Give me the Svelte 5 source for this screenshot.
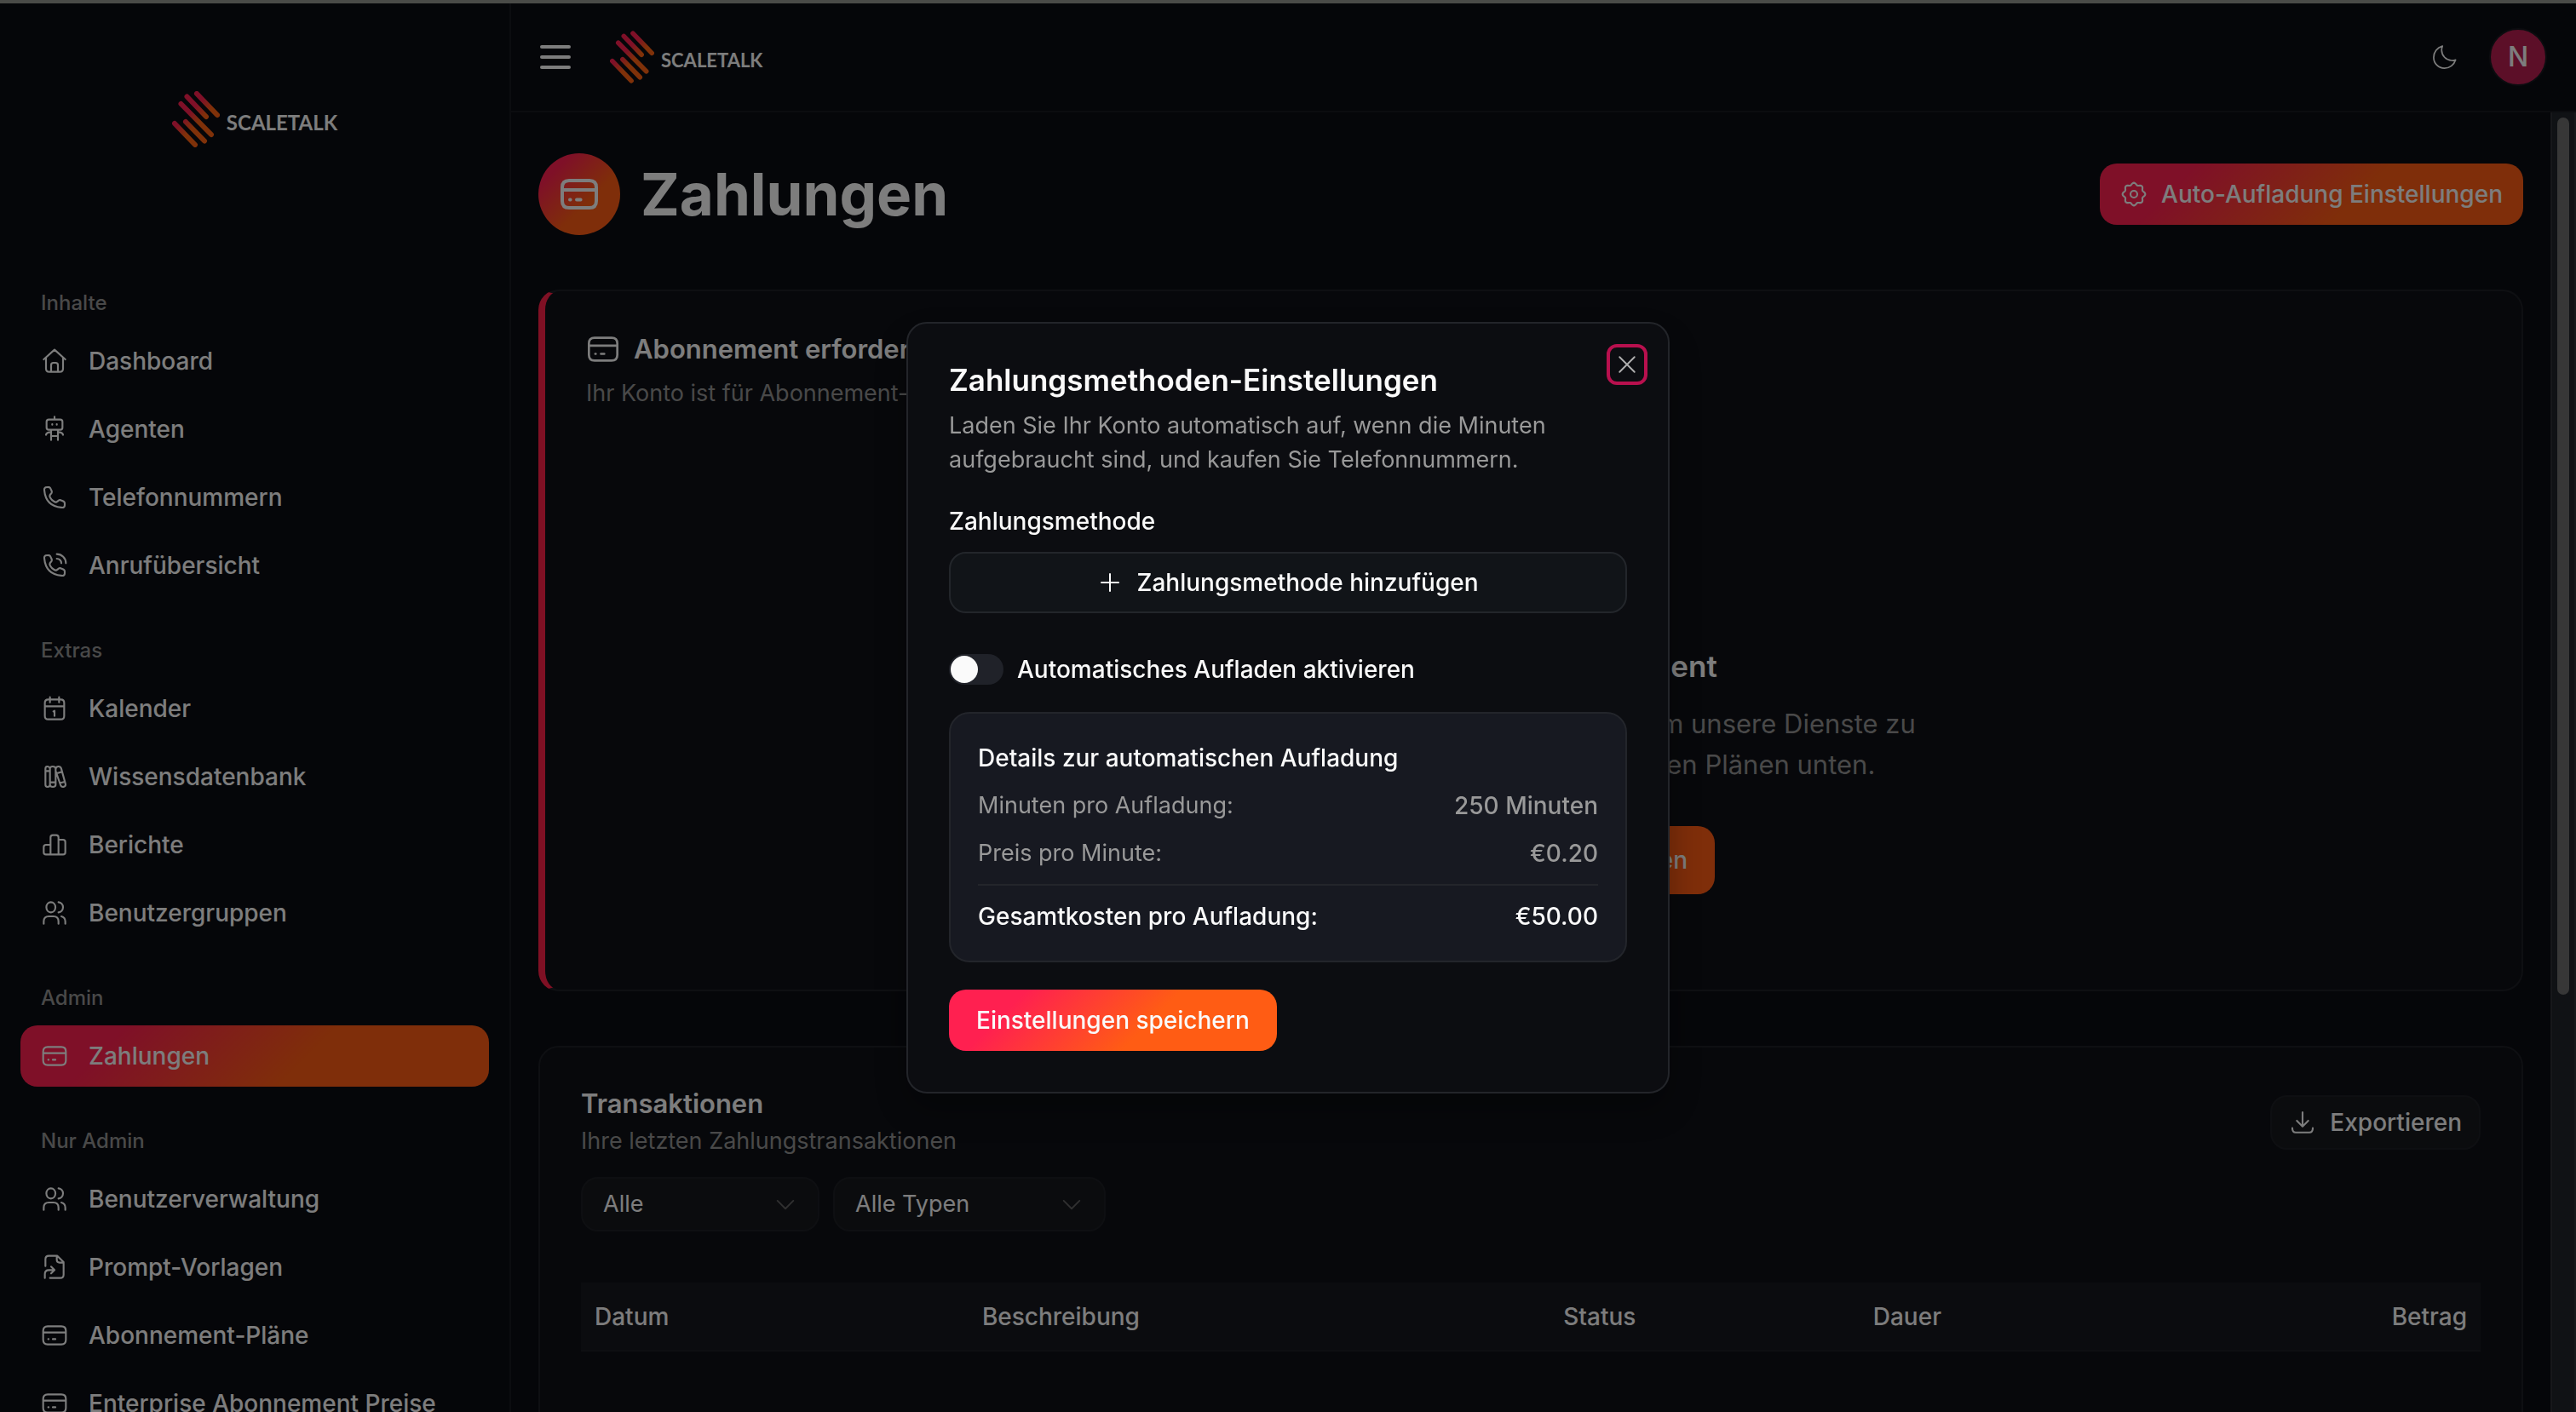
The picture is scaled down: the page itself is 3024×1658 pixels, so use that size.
<script>
	// scalloped outline of the settings wheel
	function gear(cx, cy, lobes) {
		let d = '';
		for (let i = 0; i < 96; i++) {
			const a = (i / 96) * Math.PI * 2;
			const r = 9.1 + 0.9 * Math.cos(lobes * a);
			d += `${i ? 'L' : 'M'}${(cx + r * Math.sin(a)).toFixed(2)} ${(cy - r * Math.cos(a)).toFixed(2)}`;
		}
		return d + 'Z';
	}

	const handset = 'M9.16 5.71L8.76 4.81C8.49 4.21 8.36 3.92 8.16 3.69C7.92 3.41 7.6 3.2 7.24 3.09C6.95 3 6.62 3 5.98 3C5.03 3 4.55 3 4.16 3.18C3.69 3.4 3.26 3.86 3.09 4.35C2.95 4.76 2.99 5.19 3.07 6.04C3.95 15.09 8.91 20.05 17.96 20.93C18.81 21.01 19.24 21.05 19.65 20.91C20.14 20.74 20.6 20.31 20.82 19.84C21 19.45 21 18.97 21 18.02C21 17.38 21 17.05 20.91 16.76C20.8 16.4 20.59 16.08 20.31 15.84C20.08 15.64 19.79 15.51 19.19 15.24L18.29 14.84C17.65 14.56 17.33 14.41 17 14.38C16.69 14.35 16.37 14.4 16.08 14.51C15.78 14.63 15.51 14.85 14.97 15.3C14.43 15.75 14.16 15.97 13.83 16.09C13.54 16.2 13.16 16.24 12.85 16.2C12.51 16.14 12.24 16 11.71 15.72C10.07 14.84 9.16 13.93 8.28 12.29C8 11.76 7.86 11.49 7.81 11.15C7.76 10.84 7.8 10.46 7.91 10.17C8.03 9.84 8.25 9.57 8.7 9.03C9.15 8.49 9.37 8.22 9.49 7.92C9.6 7.63 9.65 7.31 9.62 7C9.59 6.67 9.44 6.35 9.16 5.71Z';

	const icons = {
		home: 'M2.5 10.5L12 2l9.5 8.5M4.5 9v9.5c0 2 1 3 3 3h9c2 0 3-1 3-3V9M9 21.5v-6c0-1.4.6-2 2-2h2c1.4 0 2 .6 2 2v6',
		robot: 'M12 1v2.5M7 3.5h10c1.3 0 2 .7 2 2v5c0 1.3-.7 2-2 2H7c-1.3 0-2-.7-2-2v-5c0-1.3.7-2 2-2ZM10 7.5v.6M14 7.5v.6M9 12.5v9M15 12.5v9M9 18h6M4.5 17c.3-1.600 2-2.5 4.5-2.5M19.5 17c-.3-1.600-2-2.5-4.5-2.5',
		phone: handset,
		calls: handset + 'M14 2c4.4 0 8 3.6 8 8M14 6c2.2 0 4 1.8 4 4',
		calendar: 'M6.5 4h11c2 0 3 1 3 3v11.5c0 2-1 3-3 3h-11c-2 0-3-1-3-3V7c0-2 1-3 3-3ZM8 2v4.5M16 2v4.5M3.5 10h17M11 14.5l1-.5v4.5',
		books: 'M4 5c0-1.3.5-2 1.5-2S8 3.7 8 5v14c0 1.3-1 2-2.2 2S4 20.3 4 19ZM8 5c0-1.3.8-2 2.3-2S13 3.7 13 5v14c0 1.3-1 2-2.5 2S8 20.3 8 19M4 7h4M8 17h5M13 5.5c0-1.5.8-2.3 2.2-2.5 1.3-.1 2.3.5 2.7 1.8l3.7 13.4c.4 1.4-.2 2.4-1.6 2.7-1.4.3-2.3-.3-2.7-1.6L13 7M14 9l4.5-1.2M17 17.5l4-1',
		chart: 'M8.5 20.5v-8.5H4.5c-1.4 0-2 .6-2 2v4.5c0 1.4.6 2 2 2h15c1.4 0 2-.6 2-2V9.5c0-1.4-.6-2-2-2h-4M8.5 12V5.5c0-1.4.6-2 2-2h3c1.4 0 2 .6 2 2v15',
		users: 'M8.8 2.5c2.3 0 4 2 4 4.5s-1.7 4.5-4 4.5-4-2-4-4.5 1.7-4.5 4-4.5ZM15.5 2.5c2.2.2 4 2.1 4 4.5s-1.8 4.3-4 4.5M2.5 21.5v-2c0-2.8 1.7-4.5 4.5-4.5h4c2.8 0 4.5 1.7 4.5 4.5v2M18 15c2.3.6 3.5 2.3 3.5 4.5v2',
		card: 'M6 4h12c2.7 0 4 1.3 4 4v8c0 2.7-1.3 4-4 4H6c-2.7 0-4-1.3-4-4V8c0-2.7 1.3-4 4-4ZM2 9.5h20M6.5 15.3h.3M10.5 15.3h2.3',
		file: 'M4 11V5c0-2 1-3 3-3h7.5l5.5 5.5v11c0 2-1 3-3 3H8M14 2v3.5c0 1.7.8 2.5 2.5 2.5H20M3.5 21.5V18c0-2.3 1.2-3.5 3.5-3.5h5M9 11.5l3 3-3 3',
		gear: gear(12, 12, 8) + 'M12 9c1.7 0 3 1.3 3 3s-1.3 3-3 3-3-1.3-3-3 1.3-3 3-3Z',
		moon: 'M21.5 14.5c-1 .4-2.3.6-3.5.5C13 14.7 9.3 10.8 9.2 6c0-1.3.2-2.5.7-3.7C5.3 3.6 2.2 7.5 2.2 12.3c0 5.3 4.2 9.5 9.5 9.5 4.5 0 8.5-3 9.8-7.3Z',
		download: 'M12 3v12M7 10.5l5 5 5-5M3 17c0 2.5.8 3.8 3 3.8h12c2.2 0 3-1.3 3-3.8',
		plus: 'M12 4v16M4 12h16',
		close: 'M4.5 4.5l15 15M19.5 4.5l-15 15',
		chevron: 'M4 8.5l8 8 8-8'
	};

	const groups = [
		{
			title: 'Inhalte',
			items: [
				['home', 'Dashboard'],
				['robot', 'Agenten'],
				['phone', 'Telefonnummern'],
				['calls', 'Anrufübersicht']
			]
		},
		{
			title: 'Extras',
			items: [
				['calendar', 'Kalender'],
				['books', 'Wissensdatenbank'],
				['chart', 'Berichte'],
				['users', 'Benutzergruppen']
			]
		},
		{
			title: 'Admin',
			items: [['card', 'Zahlungen']]
		},
		{
			title: 'Nur Admin',
			items: [
				['users', 'Benutzerverwaltung'],
				['file', 'Prompt-Vorlagen'],
				['card', 'Abonnement-Pläne'],
				['card', 'Enterprise Abonnement Preise']
			]
		}
	];

	let active = $state('Zahlungen');
	let open = $state(true);
	let autoRecharge = $state(false);
	let minutes = 250;
	let price = 0.2;
	let total = $derived((minutes * price).toFixed(2));
</script>

{#snippet icon(name, size = '')}
	<svg class="icon {size}" viewBox="0 0 24 24" aria-hidden="true"><path d={icons[name]} /></svg>
{/snippet}

{#snippet logo(id, size)}
	<a class="logo {size}" href="#home">
		<svg viewBox="0 0 56 66" aria-hidden="true">
			<defs>
				<linearGradient id={id} gradientUnits="userSpaceOnUse" x1="10" y1="18" x2="38" y2="46">
					<stop offset="0.3" stop-color="#ff2050" />
					<stop offset="0.7" stop-color="#ff6212" />
				</linearGradient>
			</defs>
			<path
				stroke="url(#{id})"
				d="M29 3L53 28M17.5 6.5L40 30M10.5 15L46 51M3 38L27 63M16 36L38 58.5"
			/>
		</svg>
		<span>SCALETALK</span>
	</a>
{/snippet}

<div class="app">
	<aside class="sidebar">
		<div class="brand">{@render logo('logo-side', 'large')}</div>
		<nav>
			{#each groups as group}
				<section class="group">
					<h2>{group.title}</h2>
					<ul>
						{#each group.items as [name, label]}
							<li>
								<a href="#{name}" class:active={active === label} onclick={() => (active = label)}>
									{@render icon(name)}
									{label}
								</a>
							</li>
						{/each}
					</ul>
				</section>
			{/each}
		</nav>
	</aside>

	<div class="page">
		<header class="topbar">
			<button class="burger" type="button" aria-label="Menü"><i></i><i></i><i></i></button>
			{@render logo('logo-top', 'small')}
			<button class="theme" type="button" aria-label="Design">{@render icon('moon', 'thin')}</button>
			<button class="avatar" type="button">N</button>
		</header>

		<div class="scroller">
			<main>
				<div class="heading">
					<span class="badge">{@render icon('card', 'xl')}</span>
					<h1>Zahlungen</h1>
					<button class="btn primary" type="button" onclick={() => (open = true)}>
						{@render icon('gear')}
						Auto-Aufladung Einstellungen
					</button>
				</div>

				<section class="card subscription">
					<h2>{@render icon('card', 'lg')}Abonnement erforderlich</h2>
					<p class="muted">Ihr Konto ist für Abonnement-Zahlungen eingerichtet</p>
					<div class="empty">
						<h3>Kein aktives Abonnement</h3>
						<p>
							Sie benötigen ein aktives Abonnement, um unsere Dienste zu<br />
							nutzen. Wählen Sie aus den verfügbaren Plänen unten.
						</p>
						<button class="btn primary tall" type="button">Verfügbare Pläne anzeigen</button>
					</div>
				</section>

				<section class="card transactions">
					<div class="card-head">
						<div>
							<h2>Transaktionen</h2>
							<p class="muted">Ihre letzten Zahlungstransaktionen</p>
						</div>
						<button class="btn outline" type="button">{@render icon('download')}Exportieren</button>
					</div>
					<div class="filters">
						<label class="status">
							<select aria-label="Status"><option>Alle</option></select>
							{@render icon('chevron', 'sm')}
						</label>
						<label class="type">
							<select aria-label="Typ"><option>Alle Typen</option></select>
							{@render icon('chevron', 'sm')}
						</label>
					</div>
					<table>
						<thead>
							<tr>
								<th class="date">Datum</th>
								<th class="desc">Beschreibung</th>
								<th class="state">Status</th>
								<th>Dauer</th>
								<th class="amount">Betrag</th>
							</tr>
						</thead>
					</table>
				</section>
			</main>
			<div class="track"><div class="thumb"></div></div>
		</div>
	</div>
</div>

{#if open}
	<div class="overlay">
		<div class="modal" role="dialog" aria-modal="true" aria-labelledby="modal-title">
			<button class="close" type="button" aria-label="Schließen" onclick={() => (open = false)}>
				{@render icon('close', 'sm')}
			</button>
			<h2 id="modal-title">Zahlungsmethoden-Einstellungen</h2>
			<p class="lead">
				Laden Sie Ihr Konto automatisch auf, wenn die Minuten<br />
				aufgebraucht sind, und kaufen Sie Telefonnummern.
			</p>
			<h3>Zahlungsmethode</h3>
			<button class="btn add" type="button">{@render icon('plus', 'md')}Zahlungsmethode hinzufügen</button>

			<div class="toggle">
				<input id="auto" type="checkbox" role="switch" bind:checked={autoRecharge} />
				<label for="auto">Automatisches Aufladen aktivieren</label>
			</div>

			<div class="details">
				<h3>Details zur automatischen Aufladung</h3>
				<div class="row"><span>Minuten pro Aufladung:</span><b>{minutes} Minuten</b></div>
				<div class="row"><span>Preis pro Minute:</span><b>€{price.toFixed(2)}</b></div>
				<div class="row total"><span>Gesamtkosten pro Aufladung:</span><b>€{total}</b></div>
			</div>

			<button class="btn primary save" type="button">Einstellungen speichern</button>
		</div>
	</div>
{/if}

<style>
	:global(body) {
		background: #0b0d13;
		overflow: hidden;
	}
	.app,
	.overlay {
		font-family: Inter, "Liberation Sans", sans-serif;
		font-size: 28px;
		line-height: 40px;
		color: #fafafa;
	}
	.app {
		box-sizing: border-box;
		display: flex;
		height: 100vh;
		border-top: 4px solid #4a4b48;
	}
	h1, h2, h3, p, ul {
		margin: 0;
		padding: 0;
	}
	ul {
		list-style: none;
	}
	a {
		color: inherit;
		text-decoration: none;
	}
	button,
	select {
		box-sizing: border-box;
		font: inherit;
		color: inherit;
		cursor: pointer;
	}

	.icon {
		flex: none;
		width: 32px;
		height: 32px;
		fill: none;
		stroke: currentColor;
		stroke-width: 1.6;
		stroke-linecap: round;
		stroke-linejoin: round;
	}
	.icon.thin {
		stroke-width: 1.3;
	}
	.icon.sm {
		width: 28px;
		height: 28px;
	}
	.icon.md {
		width: 30px;
		height: 30px;
	}
	.icon.lg {
		width: 40px;
		height: 40px;
	}
	.icon.xl {
		width: 48px;
		height: 48px;
		stroke-width: 2;
	}

	.logo {
		display: flex;
		align-items: center;
		gap: 8px;
		font-family: Lato, sans-serif;
		font-weight: 700;
	}
	.logo svg {
		fill: none;
		stroke-width: 6;
		stroke-linecap: round;
	}
	.logo span {
		padding-top: 8px;
	}
	.logo.large {
		font-size: 24px;
	}
	.logo.large svg {
		width: 56px;
		height: 66px;
	}
	.logo.small {
		font-size: 22px;
	}
	.logo.small svg {
		width: 52px;
		height: 62px;
	}

	.sidebar {
		box-sizing: border-box;
		flex: none;
		width: 600px;
		padding: 0 24px;
		border-right: 2px solid #17191f;
		overflow: hidden;
	}
	.brand {
		display: flex;
		justify-content: center;
		align-items: center;
		height: 272px;
		margin-bottom: 48px;
	}
	.group {
		margin-bottom: 32px;
	}
	.group h2 {
		padding: 0 24px;
		font-size: 24px;
		font-weight: 500;
		line-height: 64px;
		color: #939393;
	}
	.group ul {
		display: grid;
		gap: 8px;
	}
	.group a {
		display: flex;
		align-items: center;
		gap: 24px;
		height: 72px;
		padding: 0 24px;
		border-radius: 20px;
		font-weight: 500;
		white-space: nowrap;
	}
	.group a.active,
	.primary {
		background: linear-gradient(135deg, #ff2050 20%, #ff5c14 60%);
	}

	.page {
		flex: 1;
		min-width: 0;
		display: flex;
		flex-direction: column;
	}
	.topbar {
		box-sizing: border-box;
		flex: none;
		display: flex;
		align-items: center;
		height: 128px;
		padding: 0 34px;
		border-bottom: 2px solid #17191f;
	}
	.burger {
		display: grid;
		gap: 8px;
		width: 36px;
		margin-right: 46px;
		padding: 0;
		border: 0;
		background: none;
	}
	.burger i {
		height: 4px;
		border-radius: 2px;
		background: #fafafa;
	}
	.theme {
		display: flex;
		margin-left: auto;
		margin-right: 36px;
		padding: 0;
		border: 0;
		background: none;
	}
	.avatar {
		width: 68px;
		height: 68px;
		padding: 0;
		border: 2px solid #17191f;
		border-radius: 50%;
		background: #b81e50;
		font-size: 32px;
		font-weight: 500;
	}

	.scroller {
		flex: 1;
		min-height: 0;
		display: flex;
	}
	main {
		flex: 1;
		min-width: 0;
		padding: 0 32px;
		overflow: hidden;
	}
	.track {
		box-sizing: border-box;
		flex: none;
		width: 30px;
		padding: 6px;
		border: solid #2e3036;
		border-width: 0 2px;
		background: #20252b;
	}
	.thumb {
		height: 68%;
		border-radius: 8px;
		background: #6e6e6e;
	}

	.heading {
		display: flex;
		align-items: center;
		gap: 24px;
		height: 96px;
		padding: 48px 0 64px;
	}
	.badge {
		display: flex;
		justify-content: center;
		align-items: center;
		width: 96px;
		height: 96px;
		border-radius: 50%;
		background: linear-gradient(135deg, #ff2050 20%, #ff5c14 60%);
	}
	h1 {
		font-size: 69px;
		line-height: 80px;
	}
	.heading .btn {
		margin-left: auto;
	}

	.btn {
		display: flex;
		justify-content: center;
		align-items: center;
		gap: 16px;
		height: 72px;
		padding: 0 24px;
		border: 0;
		border-radius: 20px;
		font-weight: 500;
		white-space: nowrap;
	}
	.btn.tall {
		height: 80px;
		padding: 0 32px;
	}
	.btn.outline {
		height: 64px;
		padding: 0 20px;
		border: 2px solid #1d1f24;
		background: #16181d;
	}

	.card {
		box-sizing: border-box;
		border: 2px solid #1d1f25;
		border-radius: 24px;
		background: #0e1016;
	}
	.card h2 {
		font-size: 31px;
		font-weight: 600;
	}
	.muted {
		font-size: 27px;
		color: #939393;
	}
	.subscription {
		height: 824px;
		margin-bottom: 64px;
		padding: 48px;
		border-left: 8px solid #ff2048;
	}
	.subscription h2 {
		display: flex;
		align-items: center;
		gap: 16px;
		margin-bottom: 12px;
	}
	.empty {
		display: flex;
		flex-direction: column;
		align-items: center;
		padding-top: 280px;
		text-align: center;
	}
	.empty h3 {
		margin-bottom: 24px;
		font-size: 35px;
		font-weight: 600;
	}
	.empty p {
		margin-bottom: 48px;
		font-size: 31px;
		line-height: 48px;
		color: #939393;
	}

	.transactions {
		min-height: 600px;
		padding: 46px 48px;
	}
	.transactions h2 {
		margin-bottom: 4px;
	}
	.card-head {
		display: flex;
		justify-content: space-between;
		align-items: center;
		margin-bottom: 22px;
	}
	.filters {
		display: flex;
		gap: 16px;
		margin-bottom: 60px;
	}
	.filters label {
		display: grid;
		align-items: center;
	}
	.filters select,
	.filters .icon {
		grid-area: 1 / 1;
	}
	.filters select {
		appearance: none;
		height: 64px;
		padding: 0 24px;
		border: 2px solid #1d1f24;
		border-radius: 20px;
		background: #16181d;
		font-size: 27px;
	}
	.filters .icon {
		justify-self: end;
		margin-right: 26px;
		color: #606060;
		pointer-events: none;
	}
	.filters .status {
		width: 280px;
	}
	.filters .type {
		width: 320px;
	}

	table {
		width: 100%;
		table-layout: fixed;
		border-collapse: collapse;
	}
	th {
		box-sizing: border-box;
		height: 80px;
		padding: 0 16px;
		border-bottom: 2px solid #1d1f25;
		background: #16181e;
		font-weight: 500;
		text-align: left;
	}
	th.date {
		width: 20.4%;
	}
	th.desc {
		width: 30.6%;
	}
	th.state {
		width: 16.3%;
	}
	th.amount {
		text-align: right;
	}

	.overlay {
		position: fixed;
		inset: 4px 0 0;
		display: flex;
		justify-content: center;
		align-items: center;
		background: rgba(0, 0, 0, 0.5);
	}
	.modal {
		position: relative;
		box-sizing: border-box;
		width: 896px;
		padding: 48px;
		border: 2px solid #23252a;
		border-radius: 24px;
		background: #0c0d11;
		box-shadow: 0 20px 40px rgba(0, 0, 0, 0.3);
	}
	.modal h2 {
		margin-bottom: 16px;
		font-size: 35px;
		font-weight: 600;
		line-height: 36px;
	}
	.modal h3 {
		font-size: 28px;
		font-weight: 500;
		margin-bottom: 16px;
	}
	.lead {
		margin-bottom: 32px;
		font-size: 27px;
		color: #999;
		white-space: nowrap;
	}
	.close {
		position: absolute;
		top: 24px;
		right: 24px;
		display: flex;
		justify-content: center;
		align-items: center;
		width: 48px;
		height: 48px;
		padding: 0;
		border: 4px solid #b8104e;
		border-radius: 12px;
		background: none;
		color: #b0b0b0;
	}
	.add {
		width: 100%;
		border: 2px solid #23262b;
		background: #111418;
	}
	.toggle {
		display: flex;
		align-items: center;
		gap: 16px;
		height: 36px;
		margin: 48px 0 32px;
		font-weight: 500;
	}
	.toggle input {
		appearance: none;
		box-sizing: border-box;
		width: 64px;
		height: 36px;
		margin: 0;
		padding: 2px;
		border-radius: 18px;
		background: #202229;
		cursor: pointer;
	}
	.toggle input::before {
		content: '';
		display: block;
		width: 32px;
		height: 32px;
		border-radius: 50%;
		background: #fafafa;
	}
	.toggle input:checked {
		background: #ff2050;
	}
	.toggle input:checked::before {
		margin-left: auto;
	}
	.details {
		margin-bottom: 32px;
		padding: 32px;
		border: 2px solid #23252b;
		border-radius: 24px;
		background: #171921;
	}
	.row {
		display: flex;
		justify-content: space-between;
		margin-bottom: 16px;
		font-size: 27px;
		color: #999;
	}
	.row b {
		font-size: 28px;
		font-weight: 500;
	}
	.row.total {
		margin-bottom: 0;
		padding-top: 16px;
		border-top: 2px solid #23252b;
		font-size: 28px;
		font-weight: 500;
		color: #fafafa;
	}
	.save {
		padding: 0 32px;
	}
</style>
